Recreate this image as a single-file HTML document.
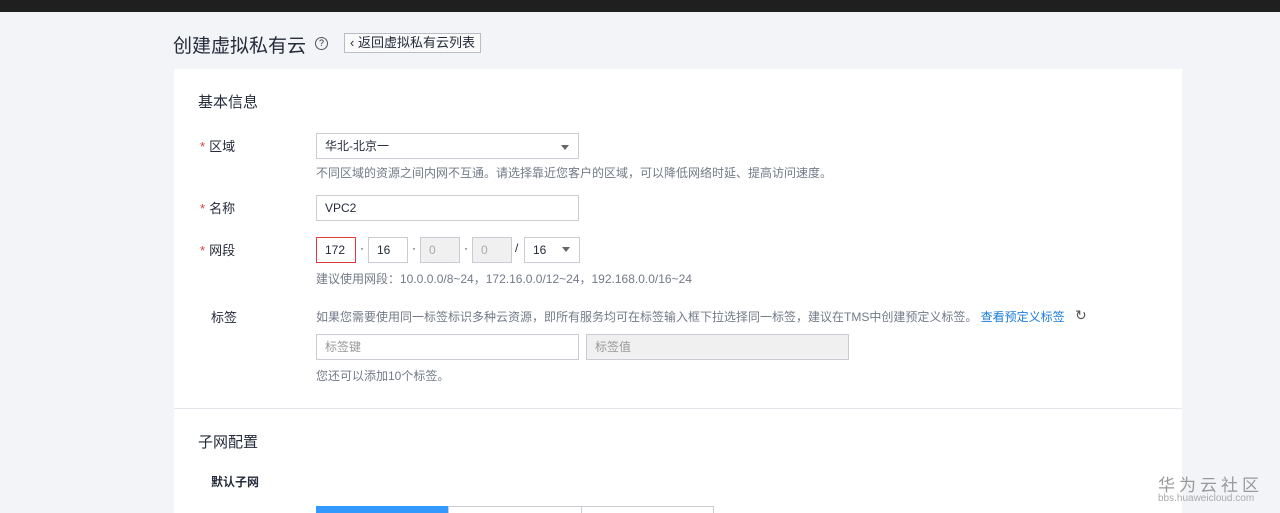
<!DOCTYPE html>
<html><head><meta charset="utf-8"><style>
*{margin:0;padding:0;box-sizing:border-box}
html,body{width:1280px;height:513px;overflow:hidden}
body{background:#f3f4f7;font-family:"Liberation Sans","Noto Sans CJK SC",sans-serif;color:#252b3a;position:relative;font-size:12px}
.top{position:absolute;left:0;top:0;width:1280px;height:12px;background:#1f1f1f}
.abs{position:absolute;white-space:nowrap}
.card{position:absolute;left:174px;top:69px;width:1008px;height:444px;background:#fff}
.inp{position:absolute;height:26px;border:1px solid #c9ccd3;background:#fff;font-size:12px;line-height:24px;padding-left:8px;color:#252b3a}
.dis{background:#f0f0f0;color:#aaa}
.star{color:#e0393e;margin-right:4px}
.lbl{font-size:13px;color:#252b3a}
.hint{color:#737a87;font-size:12px}
.arr{position:absolute;width:0;height:0;border-left:4px solid transparent;border-right:4px solid transparent;border-top:5px solid #666}
</style></head><body>
<div class="top"></div>
<div class="abs" style="left:173px;top:31px;font-size:19px;color:#252b3a">创建虚拟私有云</div>
<div class="abs" style="left:315px;top:37px;width:13px;height:13px;border:1px solid #555;border-radius:50%;font-size:9px;line-height:11px;text-align:center">?</div>
<div class="abs" style="left:344px;top:33px;width:137px;height:20px;border:1px solid #b8bcc4;background:#fafafa;font-size:13px;line-height:18px;padding-left:5px">&lsaquo; 返回虚拟私有云列表</div>
<div class="card"></div>
<div class="abs" style="left:198px;top:91px;font-size:15px">基本信息</div>
<div class="abs lbl" style="left:200px;top:136px"><span class="star">*</span>区域</div>
<div class="inp" style="left:316px;top:133px;width:263px">华北-北京一</div>
<div class="arr" style="left:561px;top:145px"></div>
<div class="abs hint" style="left:316px;top:164px">不同区域的资源之间内网不互通。请选择靠近您客户的区域，可以降低网络时延、提高访问速度。</div>
<div class="abs lbl" style="left:200px;top:198px"><span class="star">*</span>名称</div>
<div class="inp" style="left:316px;top:195px;width:263px">VPC2</div>
<div class="abs lbl" style="left:200px;top:240px"><span class="star">*</span>网段</div>
<div class="inp" style="left:316px;top:237px;width:40px;border-color:#e0393e">172</div>
<div class="abs" style="left:360px;top:241px">·</div>
<div class="inp" style="left:368px;top:237px;width:40px">16</div>
<div class="abs" style="left:412px;top:241px">·</div>
<div class="inp dis" style="left:420px;top:237px;width:40px">0</div>
<div class="abs" style="left:464px;top:241px">·</div>
<div class="inp dis" style="left:472px;top:237px;width:40px">0</div>
<div class="abs" style="left:515px;top:241px">/</div>
<div class="inp" style="left:524px;top:237px;width:56px">16</div>
<div class="arr" style="left:562px;top:247px"></div>
<div class="abs hint" style="left:316px;top:270px">建议使用网段：10.0.0.0/8~24，172.16.0.0/12~24，192.168.0.0/16~24</div>
<div class="abs lbl" style="left:211px;top:307px">标签</div>
<div class="abs hint" style="left:316px;top:308px">如果您需要使用同一标签标识多种云资源，即所有服务均可在标签输入框下拉选择同一标签，建议在TMS中创建预定义标签。 <span style="color:#1a7cd9">查看预定义标签</span></div>
<div class="abs" style="left:1075px;top:307px;font-size:14px;color:#555">↻</div>
<div class="inp" style="left:316px;top:334px;width:263px;color:#999">标签键</div>
<div class="inp dis" style="left:586px;top:334px;width:263px;color:#999">标签值</div>
<div class="abs hint" style="left:316px;top:367px">您还可以添加10个标签。</div>
<div class="abs" style="left:174px;top:408px;width:1008px;height:1px;background:#e3e5ea"></div>
<div class="abs" style="left:198px;top:431px;font-size:15px">子网配置</div>
<div class="abs" style="left:211px;top:473px;font-size:12px;font-weight:bold">默认子网</div>
<div class="abs" style="left:316px;top:506px;width:132px;height:10px;background:#3399ff"></div>
<div class="abs" style="left:448px;top:506px;width:266px;height:10px;border:1px solid #c9ccd3;border-bottom:none"></div>
<div class="abs" style="left:581px;top:506px;width:1px;height:10px;background:#c9ccd3"></div>
<div class="abs" style="left:1158px;top:471px;font-size:17px;color:#999;letter-spacing:4px">华为云社区</div>
<div class="abs" style="left:1158px;top:493px;font-size:10px;color:#aaa">bbs.huaweicloud.com</div>
</body></html>
